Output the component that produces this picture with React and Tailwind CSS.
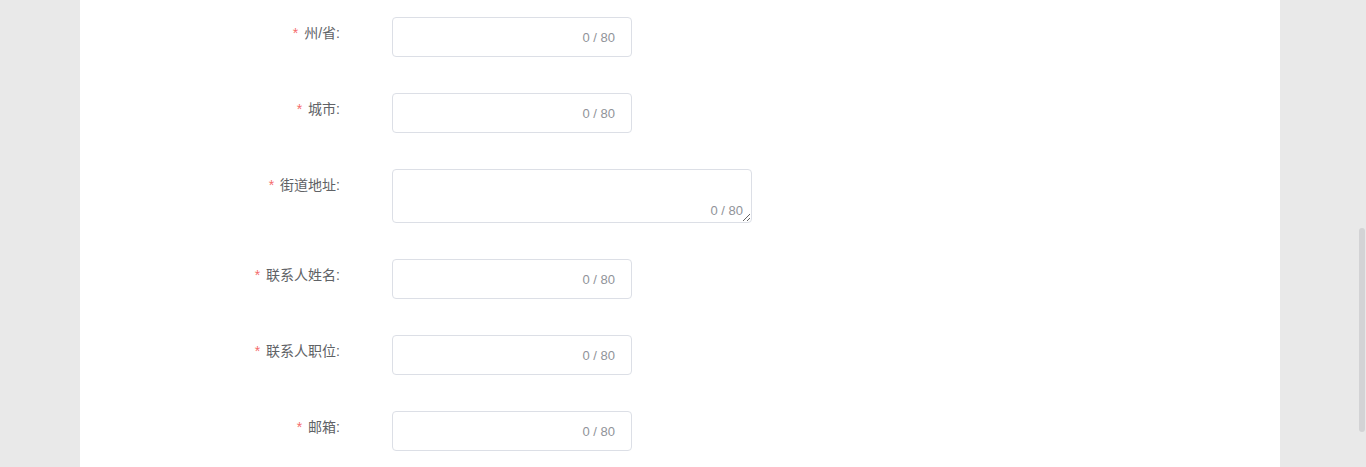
import React from 'react';

const campos = [
  { label: '州/省', tipo: 'input' },
  { label: '城市', tipo: 'input' },
  { label: '街道地址', tipo: 'textarea' },
  { label: '联系人姓名', tipo: 'input' },
  { label: '联系人职位', tipo: 'input' },
  { label: '邮箱', tipo: 'input' },
];

const fuente = { fontFamily: '"Liberation Sans", "Noto Sans CJK SC", sans-serif' };

function Campo({ label, tipo }) {
  return (
    <div className="flex items-start mb-[36px]">
      <div className="w-[272px] pr-[12px] h-[32px] leading-[32px] text-right text-[14px] text-[#606266]">
        <span className="text-[#f56c6c] mr-[6px]">*</span>
        {label}:
      </div>
      <div className="ml-[40px]">
        {tipo === 'textarea' ? (
          <div className="relative w-[360px] h-[54px]">
            <textarea
              className="block w-full h-full border border-[#dcdfe6] rounded-[4px] resize-y outline-none px-[15px] py-[5px] text-[14px]"
            />
            <span className="absolute right-[9px] bottom-[4px] text-[13px] leading-[16px] text-[#909399]">0 / 80</span>
          </div>
        ) : (
          <div className="w-[240px] h-[40px] border border-[#dcdfe6] rounded-[4px] flex items-center justify-end pr-[16px] pt-[2px]">
            <span className="text-[13px] text-[#909399]">0 / 80</span>
          </div>
        )}
      </div>
    </div>
  );
}

export default function App() {
  return (
    <div className="relative h-[467px] overflow-hidden flex bg-[#e9e9e9]" style={fuente}>
      <div className="w-[80px] shrink-0" />
      <div className="w-[1200px] shrink-0 bg-white pt-[17px]">
        {campos.map((c) => (
          <Campo key={c.label} {...c} />
        ))}
      </div>
      <div className="flex-1" />
      <div className="absolute right-[1px] top-[228px] w-[6px] h-[204px] rounded-[3px] bg-[#d3d3d5]" />
    </div>
  );
}
